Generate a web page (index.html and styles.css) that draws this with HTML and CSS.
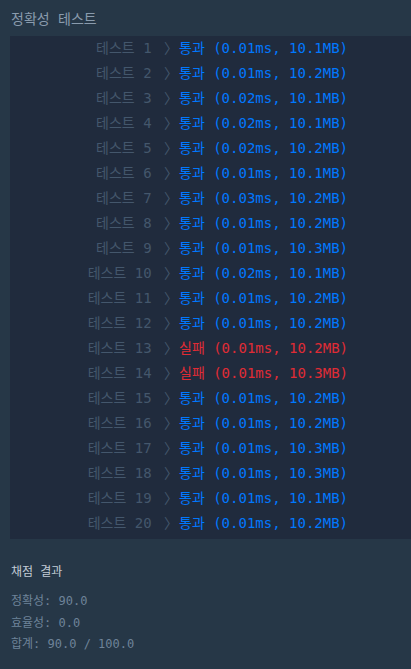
FILE: index.html
```html
<!DOCTYPE html>
<html lang="ko">

<head>
    <meta charset="UTF-8">
    <meta name="viewport" content="width=device-width, initial-scale=1.0">
    <title>채점 결과</title>
    <link rel="stylesheet" href="styles.css">
</head>

<body>
    <div class="console">
        <p class="console-heading">정확성 테스트</p>
        <table class="console-test-group">
            <tbody id="testRows"></tbody>
        </table>

        <p class="console-heading result-heading">채점 결과</p>
        <p class="console-message">정확성: 90.0</p>
        <p class="console-message">효율성: 0.0</p>
        <p class="console-message">합계: 90.0 / 100.0</p>
    </div>

    <script>
        // 테스트 결과 데이터
        const results = [
            ['0.01ms', '10.1MB', true],
            ['0.01ms', '10.2MB', true],
            ['0.02ms', '10.1MB', true],
            ['0.02ms', '10.1MB', true],
            ['0.02ms', '10.2MB', true],
            ['0.01ms', '10.1MB', true],
            ['0.03ms', '10.2MB', true],
            ['0.01ms', '10.2MB', true],
            ['0.01ms', '10.3MB', true],
            ['0.02ms', '10.1MB', true],
            ['0.01ms', '10.2MB', true],
            ['0.01ms', '10.2MB', true],
            ['0.01ms', '10.2MB', false],
            ['0.01ms', '10.3MB', false],
            ['0.01ms', '10.2MB', true],
            ['0.01ms', '10.2MB', true],
            ['0.01ms', '10.3MB', true],
            ['0.01ms', '10.3MB', true],
            ['0.01ms', '10.1MB', true],
            ['0.01ms', '10.2MB', true]
        ];

        const tbody = document.getElementById('testRows');
        results.forEach((r, i) => {
            const tr = document.createElement('tr');
            const label = document.createElement('td');
            label.className = 'td-label';
            label.innerHTML = '테스트 ' + (i + 1) + ' <span class="arrow">〉</span>';
            const result = document.createElement('td');
            result.className = 'result ' + (r[2] ? 'passed' : 'failed');
            result.textContent = (r[2] ? '통과' : '실패') + ' (' + r[0] + ', ' + r[1] + ')';
            tr.appendChild(label);
            tr.appendChild(result);
            tbody.appendChild(tr);
        });
    </script>
</body>

</html>
```

FILE: styles.css
```css
body {
    margin: 0;
    background-color: #263747;
    font-family: "DejaVu Sans Mono", "Noto Sans CJK KR", monospace;
    height: 669px;
    overflow: hidden;
}

.console {
    padding-top: 8px;
}

.console-heading {
    margin: 0 0 0 11px;
    font-size: 14px;
    line-height: 22px;
    color: #8a9bad;
}

.console-test-group {
    margin: 6px 0 0 10px;
    width: 401px;
    background-color: #202b3d;
    border-collapse: collapse;
    font-size: 14px;
}

.console-test-group tbody::after {
    content: "";
    display: block;
    height: 3px;
}

.console-test-group td {
    padding: 0;
    height: 25px;
    line-height: 25px;
    white-space: pre;
}

.td-label {
    width: 168px;
    text-align: right;
    color: #44576c;
}

.arrow {
    margin-left: 4px;
}

.result {
    padding-left: 1px !important;
}

.passed {
    color: #0078ff;
}

.failed {
    color: #e02b35;
}

.result-heading {
    margin-top: 23px;
    margin-bottom: 9px;
    font-size: 12px;
    line-height: 20px;
    color: #c3ccd6;
}

.console-message {
    margin: 0 0 0 11px;
    font-size: 12px;
    line-height: 21.5px;
    color: #6e8399;
}
```
